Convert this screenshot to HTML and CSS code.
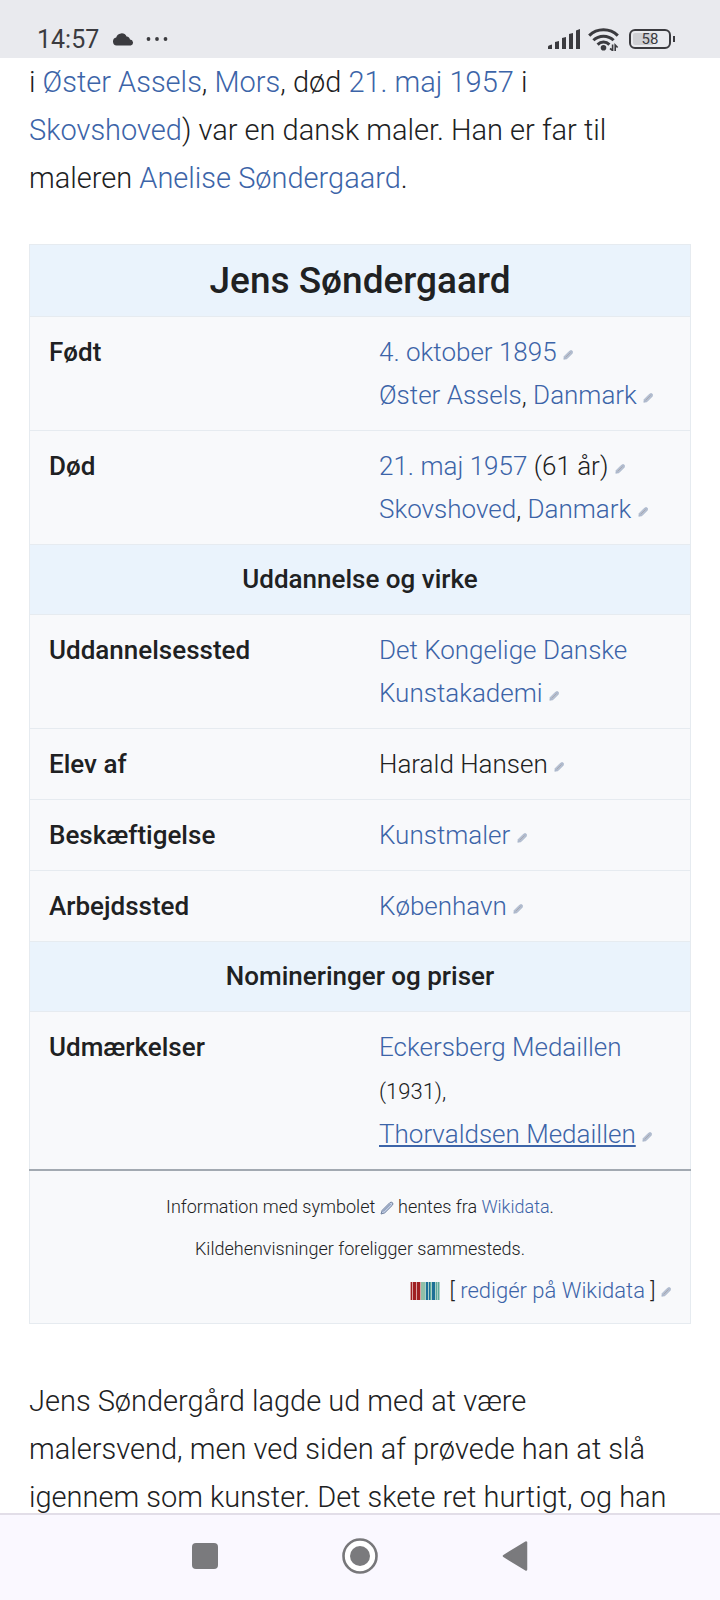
FILE: index.html
```html
<!DOCTYPE html>
<html lang="da">
<head>
    <meta charset="UTF-8">
    <meta name="viewport" content="width=device-width, initial-scale=1.0">
    <title>Jens Søndergaard</title>
    <link rel="stylesheet" href="styles.css">
</head>
<body>
    <svg class="defs" aria-hidden="true">
        <symbol id="pencil" viewBox="0 0 10 10">
            <path d="M.8 9.300 L1.200 6.400 L6.400 1.200 Q8 .1 9.200 .9 Q10 2.200 9.100 3.600 L3.900 8.800 Z" fill="#b4bfd2" stroke="#a0acc2" stroke-width=".6"/>
            <path d="M2.600 7.400 L7.600 2.400" stroke="#a9a8b0" stroke-width="1"/>
        </symbol>
    </svg>

    <header class="status">
        <div class="status-left">
            <span class="clock">14:57</span>
            <svg class="cloud" viewBox="0 0 22 13"><path d="M4.600 12.500 A4 4 0 0 1 4.200 4.600 A5.600 5.600 0 0 1 14.600 3.400 A3.800 3.800 0 0 1 18 6.600 A3 3 0 0 1 18.800 12.500 Z" fill="#3b3b3f"/></svg>
            <svg class="dots" viewBox="0 0 22 4"><g fill="#3b3b3f"><circle cx="2.500" cy="2" r="1.900"/><circle cx="11" cy="2" r="1.900"/><circle cx="19.500" cy="2" r="1.900"/></g></svg>
        </div>
        <div class="status-right">
            <svg class="signal" viewBox="0 0 32 20">
                <g fill="#3b3b3f">
                    <path d="M0 20 V17.500 Q0 16.500 4 15.500 V20 Z"/>
                    <path d="M7 20 V13 L11 12 V20 Z"/>
                    <path d="M14 20 V9 L18 8 V20 Z"/>
                    <path d="M21 20 V5 L25 4 V20 Z"/>
                    <path d="M28 20 V1.500 L32 0 V20 Z"/>
                </g>
            </svg>
            <svg class="wifi" viewBox="0 0 31 23">
                <g fill="none" stroke="#3b3b3f" stroke-width="3">
                    <path d="M1.200 7.600 C9 -.3 22 -.3 29.800 7.600"/>
                    <path d="M5.400 12.300 C11 6.800 20 6.800 25.600 12.300"/>
                    <path d="M9.600 16.600 C13 13.200 18 13.200 21.400 16.600"/>
                </g>
                <circle cx="15.500" cy="19.800" r="2.800" fill="#3b3b3f"/>
                <path d="M22 20.500 L24.600 22.500 V16.500 M27.200 23 V17 L29.600 19.500" fill="none" stroke="#3b3b3f" stroke-width="1.600"/>
            </svg>
            <div class="battery"><span>58</span></div>
        </div>
    </header>

    <main class="page">
        <p class="text">i <a href="#">Øster Assels</a>, <a href="#">Mors</a>, død <a href="#">21. maj 1957</a> i <a href="#">Skovshoved</a>) var en dansk maler. Han er far til maleren <a href="#">Anelise Søndergaard</a>.</p>

        <table class="infobox">
            <tbody>
                <tr>
                    <th class="title" colspan="2">Jens Søndergaard</th>
                </tr>
                <tr>
                    <th scope="row">Født</th>
                    <td>
                        <a href="#">4. oktober 1895</a> <svg class="pencil"><use href="#pencil"/></svg><br>
                        <a href="#">Øster Assels</a>, <a href="#">Danmark</a> <svg class="pencil"><use href="#pencil"/></svg>
                    </td>
                </tr>
                <tr>
                    <th scope="row">Død</th>
                    <td>
                        <a href="#">21. maj 1957</a> (61 år) <svg class="pencil"><use href="#pencil"/></svg><br>
                        <a href="#">Skovshoved</a>, <a href="#">Danmark</a> <svg class="pencil"><use href="#pencil"/></svg>
                    </td>
                </tr>
                <tr>
                    <th class="section" colspan="2">Uddannelse og virke</th>
                </tr>
                <tr>
                    <th scope="row">Uddannelsessted</th>
                    <td><a href="#">Det Kongelige Danske Kunstakademi</a> <svg class="pencil"><use href="#pencil"/></svg></td>
                </tr>
                <tr>
                    <th scope="row">Elev af</th>
                    <td>Harald Hansen <svg class="pencil"><use href="#pencil"/></svg></td>
                </tr>
                <tr>
                    <th scope="row">Beskæftigelse</th>
                    <td><a href="#">Kunstmaler</a> <svg class="pencil"><use href="#pencil"/></svg></td>
                </tr>
                <tr>
                    <th scope="row">Arbejdssted</th>
                    <td><a href="#">København</a> <svg class="pencil"><use href="#pencil"/></svg></td>
                </tr>
                <tr>
                    <th class="section" colspan="2">Nomineringer og priser</th>
                </tr>
                <tr>
                    <th scope="row">Udmærkelser</th>
                    <td>
                        <a href="#">Eckersberg Medaillen</a> <small class="year">(1931),</small><br>
                        <a class="underlined" href="#">Thorvaldsen Medaillen</a> <svg class="pencil"><use href="#pencil"/></svg>
                    </td>
                </tr>
                <tr>
                    <td class="source" colspan="2">
                        <p class="note">Information med symbolet <svg class="pencil-big" viewBox="0 0 14 14"><path d="M1 13 L2.200 9.300 L9.800 1.700 Q11.200 .6 12.500 1.700 Q13.500 3 12.300 4.300 L4.700 11.900 Z" fill="#c3cfe6" stroke="#71829f"/><path d="M3 10.500 L10.500 3" stroke="#71829f"/></svg> hentes fra <a href="#">Wikidata</a>.</p>
                        <p class="note">Kildehenvisninger foreligger sammesteds.</p>
                        <div class="edit">
                            <svg class="wikidata" viewBox="0 0 30 18">
                                <path d="M0 0h30v18H0z" fill="#a9cfc8"/>
                                <path d="M0 0h11v18H0z" fill="#d9a3a3"/>
                                <path d="M1 0h1v18H1zM3 0h3v18H3zM7 0h3v18H7z" fill="#a01f22"/>
                                <path d="M11 0h4v18h-4z" fill="#8fc0a8"/>
                                <path d="M16 0h2v18h-2zM19 0h1v18h-1zM22 0h3v18h-3z" fill="#1c6f96"/>
                                <path d="M20 0h1v18h-1zM26 0h1v18h-1zM28 0h1v18h-1z" fill="#5eaa9b"/>
                            </svg>
                            <span>[ <a href="#">redigér på Wikidata</a> ] <svg class="pencil"><use href="#pencil"/></svg></span>
                        </div>
                    </td>
                </tr>
            </tbody>
        </table>

        <p class="text">Jens Søndergård lagde ud med at være malersvend, men ved siden af prøvede han at slå igennem som kunster. Det skete ret hurtigt, og han</p>
    </main>

    <nav class="navbar">
        <button type="button" aria-label="Seneste apps"><svg viewBox="0 0 36 36"><rect x="5" y="5" width="26" height="26" rx="4" fill="#7a7a7d"/></svg></button>
        <button type="button" aria-label="Hjem"><svg viewBox="0 0 36 36"><circle cx="18" cy="18" r="16.500" fill="#fff" stroke="#77777a" stroke-width="2.600"/><circle cx="18" cy="18" r="10" fill="#7a7a7d"/></svg></button>
        <button type="button" aria-label="Tilbage"><svg viewBox="0 0 36 36"><path d="M7 18 L29 4.500 V31.500 Z" fill="#7a7a7d" stroke="#7a7a7d" stroke-width="2.500" stroke-linejoin="round"/></svg></button>
    </nav>
</body>
</html>
```
FILE: styles.css
```css
* {
    box-sizing: border-box;
}

body {
    display: flex;
    flex-direction: column;
    height: 100vh;
    margin: 0;
    background-color: #fff;
    color: #202122;
    font-family: Roboto, sans-serif;
    font-weight: 300;
    overflow: hidden;
}

a {
    color: #3c64a8;
    text-decoration: none;
}

.defs {
    display: none;
}

/* status bar */
.status {
    display: flex;
    flex: none;
    justify-content: space-between;
    align-items: flex-end;
    height: 58px;
    padding: 0 49px 3px 37px;
    background-color: #e9eaee;
    color: #3b3b3f;
}

.status-left,
.status-right {
    display: flex;
    align-items: center;
    height: 32px;
}

.clock {
    font-size: 25px;
    font-weight: 400;
}

.cloud {
    width: 22px;
    height: 13px;
    margin-left: 13px;
}

.dots {
    width: 22px;
    height: 4px;
    margin-left: 12px;
}

.signal {
    width: 32px;
    height: 20px;
}

.wifi {
    width: 31px;
    height: 23px;
    margin: 0 10px 0 8px;
}

.battery {
    position: relative;
    display: flex;
    align-items: center;
    justify-content: center;
    width: 42px;
    height: 20px;
    border: 2px solid #3b3b3f;
    border-radius: 6px;
    background: linear-gradient(90deg, #cfd0d4 58%, transparent 58%);
    background-clip: content-box;
    padding: 2px;
    font-size: 15px;
    font-weight: 400;
}

.battery::after {
    content: "";
    position: absolute;
    right: -6px;
    top: 5px;
    width: 2px;
    height: 6px;
    background-color: #3b3b3f;
}

/* article */
.page {
    flex: 1;
    min-height: 0;
    padding: 0 29px;
    overflow: hidden;
}

.text {
    margin: 0;
    padding-right: 10px;
    font-size: 29px;
    line-height: 48px;
}

.infobox {
    width: 100%;
    margin: 42px 0 53px;
    border: 1px solid #e6ebf0;
    border-collapse: collapse;
    table-layout: fixed;
    background-color: #f8f9fb;
    font-size: 26px;
    line-height: 43px;
}

.infobox th,
.infobox td {
    padding: 14px 19px 13px;
    border-top: 1px solid #e6ebf0;
    text-align: left;
    vertical-align: top;
}

.infobox th {
    font-weight: 500;
}

.infobox .title,
.infobox .section {
    padding: 13px 19px;
    background-color: #eaf3fc;
    text-align: center;
}

.infobox .title {
    font-size: 37px;
    line-height: 45px;
}

.year {
    font-size: 22px;
}

.underlined {
    text-decoration: underline;
}

.pencil {
    width: 10px;
    height: 10px;
    vertical-align: 1px;
}

.infobox .source {
    padding-top: 15px;
    padding-bottom: 11px;
    border-top: 2px solid #a2a9b1;
}

.note {
    margin: 0;
    font-size: 18px;
    line-height: 42px;
    text-align: center;
}

.pencil-big {
    width: 14px;
    height: 14px;
    vertical-align: -2px;
}

.edit {
    display: flex;
    justify-content: flex-end;
    align-items: center;
    gap: 10px;
    font-size: 22px;
    line-height: 42px;
}

.wikidata {
    width: 30px;
    height: 18px;
}

/* system buttons */
.navbar {
    display: flex;
    flex: none;
    justify-content: center;
    align-items: center;
    gap: 119px;
    height: 87px;
    padding-bottom: 3px;
    border-top: 2px solid #e2dee8;
    background-color: #faf8ff;
}

.navbar button {
    width: 36px;
    height: 36px;
    padding: 0;
    border: 0;
    background: none;
}

.navbar svg {
    display: block;
    width: 36px;
    height: 36px;
    overflow: visible;
}
```
